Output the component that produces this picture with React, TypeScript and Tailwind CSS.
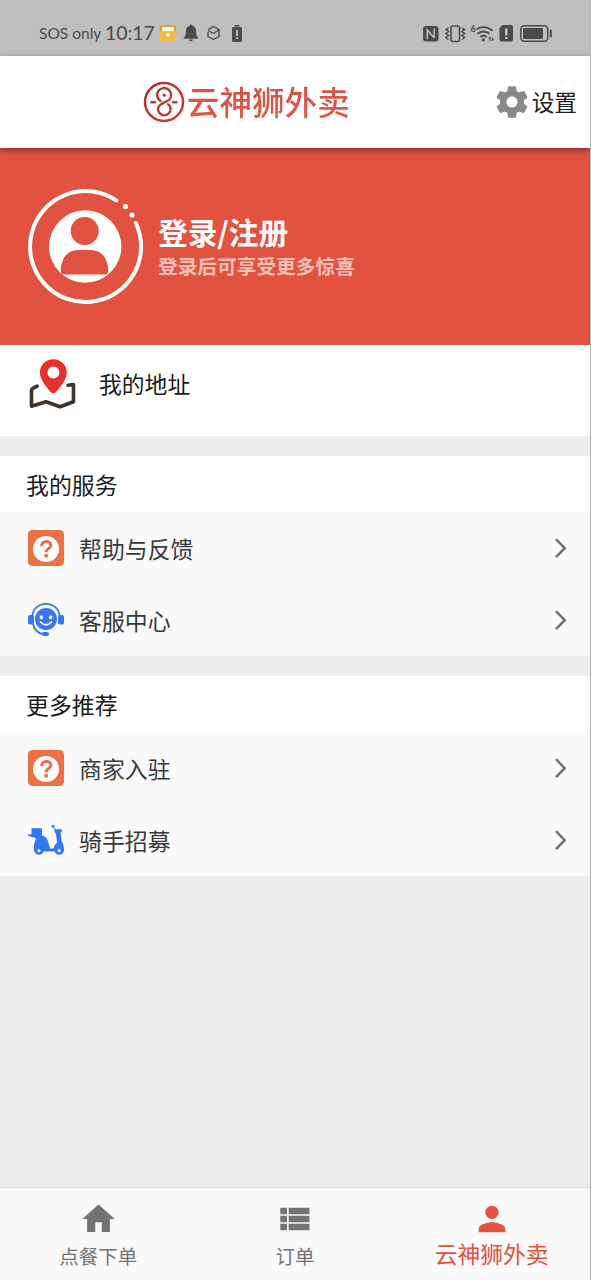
import type { ReactNode } from "react";

function StatusBar() {
  return (
    <div className="flex h-14 shrink-0 items-end justify-between bg-[#bfbfbf] pr-[37px] pb-[11px] pl-[39px] font-['Lato',sans-serif] text-[#4b4b4b]">
      <div className="flex h-6 items-center">
        <span className="w-[66px] text-[15.5px] leading-6 whitespace-nowrap">SOS only</span>
        <span className="w-[54px] text-[19.4px] leading-6 whitespace-nowrap">10:17</span>
        <svg width="18" height="18" viewBox="0 0 18 18" className="mr-[6px]">
          <rect x="1" y="1" width="16" height="16" rx="3" fill="#f5bb40" />
          <path d="M1 7V4a3 3 0 0 1 3-3h10a3 3 0 0 1 3 3v3z" fill="#dfa046" />
          <path d="M3 3h12v4H3z" fill="#fff6dc" />
          <rect x="7" y="9.5" width="4" height="3" rx="1" fill="#fff" />
        </svg>
        <svg width="16" height="18" viewBox="0 0 16 18" fill="currentColor" className="mr-[7px]">
          <path d="M8 0.5a1.5 1.5 0 0 1 1.4 1.3C11.7 2.4 13 4.2 13 6.7c0 4 .8 5.600 2.300 7v1.100H.700v-1.100C2.200 12.300 3 10.700 3 6.700c0-2.500 1.300-4.300 3.600-4.900A1.500 1.500 0 0 1 8 .500zM6.200 15.600h3.600a1.800 1.800 0 0 1-3.600 0z" />
        </svg>
        <svg
          width="15"
          height="16"
          viewBox="0 0 15 16"
          fill="none"
          stroke="currentColor"
          strokeWidth="1.4"
          strokeLinejoin="round"
          className="mr-[10px]"
        >
          <path d="M2.300 4.600 7.500 1.500l5.500 3v7L7.500 14.500 2 11.500V7M2 5.500l5.500 3 5.500-4" />
        </svg>
        <svg width="12" height="19" viewBox="0 0 12 19" fill="currentColor">
          <path d="M3.500 1h5v1.500h-5zM2.500 3h7A1.500 1.500 0 0 1 11 4.500v12A1.500 1.500 0 0 1 9.500 18h-7A1.500 1.500 0 0 1 1 16.500v-12A1.500 1.500 0 0 1 2.500 3z" />
          <path d="M5.200 6h1.600v6H5.200zM5.200 13.300h1.600V15H5.200z" fill="#d2d2d2" />
        </svg>
      </div>
      <svg width="132" height="24" viewBox="421 21 132 24" fill="currentColor">
        {/* nfc */}
        <rect x="423" y="26" width="15.500" height="15.500" rx="3" />
        <path
          d="M427.300 39V30l6.900 8M434.200 28.500v9.500M427.300 30l6.900 8"
          fill="none"
          stroke="#bfbfbf"
          strokeWidth="1.500"
        />
        {/* vibrate */}
        <rect x="451" y="26" width="8.500" height="15.500" rx="2" fill="none" stroke="currentColor" strokeWidth="1.600" />
        <path
          d="m448.500 28-2.500 1.500 2.500 2-2.500 2 2.500 2-2.500 2 2.500 2M462 28l2.500 1.500-2.500 2 2.500 2-2.500 2 2.500 2-2.500 2"
          fill="none"
          stroke="currentColor"
          strokeWidth="1.600"
        />
        {/* wifi */}
        <text x="470.500" y="31.500" fontSize="9" fontWeight="700" fontFamily="Lato, sans-serif">
          6
        </text>
        <path
          d="M476.500 29.300q8-5 16 1.500M477.500 33.700q6-4.600 12 0M480.300 37q3.200-2.400 6.200 0"
          fill="none"
          stroke="currentColor"
          strokeWidth="1.900"
        />
        <circle cx="483.400" cy="39.900" r="1.600" />
        <path d="M490 41v-4l-1.800 2M492.300 37v4l1.800-2" fill="none" stroke="currentColor" strokeWidth="1" />
        {/* sim alert */}
        <path d="M502.500 25h8.500a2 2 0 0 1 2 2v12.500a2 2 0 0 1-2 2h-9.500a2 2 0 0 1-2-2V28z" />
        <path d="M505.200 28.500h2.200v7h-2.200zM505.200 37h2.200v2h-2.200z" fill="#d2d2d2" />
        {/* battery */}
        <rect x="520.800" y="25.800" width="27" height="15.400" rx="3.500" fill="none" stroke="currentColor" strokeWidth="1.500" />
        <rect x="523" y="28" width="20" height="11" rx="1" />
        <rect x="549.800" y="29.500" width="2" height="8" rx="1" />
      </svg>
    </div>
  );
}

function LogoMark() {
  return (
    <svg width="42" height="42" viewBox="0 0 42 42" fill="none" strokeLinecap="round">
      <defs>
        <linearGradient id="brand" x1="0" y1="0" x2="1" y2="1">
          <stop offset="0" stopColor="#a92f2c" />
          <stop offset="1" stopColor="#c8443a" />
        </linearGradient>
      </defs>
      <circle cx="21" cy="21" r="19" stroke="url(#brand)" strokeWidth="2.500" />
      <path
        d="M17.500 20A7 7 0 1 1 26.500 18.500C23.500 21.500 15 22 15 28a6.300 6.300 0 0 0 12.600 0c0-2-.9-3.800-2.600-4.800M8.500 21.200H12M30 21.200h3.500"
        stroke="url(#brand)"
        strokeWidth="2.400"
      />
      <circle cx="21.200" cy="14.200" r="1.600" fill="#b23631" />
    </svg>
  );
}

function Header() {
  return (
    <header className="relative z-10 flex h-[92px] shrink-0 items-center bg-white shadow-[0_2px_6px_rgba(0,0,0,0.45)]">
      <div className="flex flex-1 items-center justify-center gap-[2px]">
        <LogoMark />
        <span className="mb-[2px] bg-linear-to-b from-[#cf4f42] to-[#e0604b] bg-clip-text text-[32.6px] leading-[48px] font-medium whitespace-nowrap text-transparent">
          云神狮外卖
        </span>
      </div>
      <div className="flex items-center gap-[1px] pr-[13px]">
        <svg width="38" height="38" viewBox="0 0 24 24" fill="#888888">
          <path d="M19.430 12.980c.040-.320.070-.640.070-.980s-.030-.660-.070-.980l2.110-1.650c.190-.150.240-.420.120-.640l-2-3.460c-.120-.220-.390-.300-.610-.220l-2.490 1c-.520-.400-1.080-.730-1.690-.980l-.380-2.650C14.460 2.180 14.250 2 14 2h-4c-.250 0-.460.180-.490.420l-.380 2.650c-.610.250-1.170.590-1.690.980l-2.490-1c-.230-.090-.490 0-.610.220l-2 3.460c-.130.220-.070.490.120.640l2.110 1.650c-.040.320-.070.650-.070.980s.030.660.070.980l-2.110 1.650c-.190.150-.240.420-.120.640l2 3.460c.120.220.390.300.610.220l2.490-1c.520.400 1.080.730 1.690.980l.380 2.650c.030.240.240.420.490.420h4c.250 0 .460-.180.490-.420l.380-2.650c.610-.250 1.170-.590 1.690-.980l2.490 1c.230.090.490 0 .610-.220l2-3.460c.120-.220.070-.490-.120-.640l-2.110-1.650zM12 15.500c-1.930 0-3.500-1.570-3.500-3.500s1.570-3.500 3.500-3.500 3.500 1.570 3.500 3.500-1.570 3.500-3.500 3.500z" />
        </svg>
        <span className="text-[22.7px] leading-8 text-[#212121]">设置</span>
      </div>
    </header>
  );
}

function Avatar() {
  return (
    <svg width="116" height="116" viewBox="27 188 116 116" fill="none">
      <path
        d="M116.200 199.300A55.500 55.500 0 1 0 135.800 222"
        stroke="#fff"
        strokeWidth="4"
        strokeLinecap="round"
      />
      <circle cx="125.500" cy="205.500" r="2.600" fill="#fff" />
      <circle cx="132" cy="214" r="2.600" fill="#fff" />
      <circle cx="85.200" cy="245.500" r="36.200" fill="#fff" />
      <circle cx="84.700" cy="230" r="14" fill="#e15241" />
      <path d="M60.800 270c0-13.500 7.200-21 17.200-21h13c10 0 17.200 7.500 17.200 21q0 3.500-3.500 3.500H64.300q-3.500 0-3.500-3.500z" fill="#e15241" />
    </svg>
  );
}

function Profile() {
  return (
    <section className="flex h-[197px] shrink-0 items-center gap-[15px] bg-[#e15241] pl-[27px]">
      <Avatar />
      <div className="flex flex-col pt-[2px] font-bold">
        <span className="text-[29.7px] leading-[36px] text-white">登录/注册</span>
        <span className="text-[19.7px] leading-8 text-[#f7c1b9]">登录后可享受更多惊喜</span>
      </div>
    </section>
  );
}

function MapIcon() {
  return (
    <svg width="48" height="52" viewBox="29 358 48 52" fill="none">
      <path
        d="M37 386.200q-5 1.800-5.500 4v16l14.500-4.500 14 5 13.500-5V384.500l-5.500.8"
        stroke="#40332b"
        strokeWidth="3.600"
        strokeLinejoin="round"
        strokeLinecap="round"
      />
      <path
        fillRule="evenodd"
        d="M53.300 359.300c7.500 0 13.500 5.800 13.500 13.200 0 6.500-5.500 13.300-10.600 19.200q-2.900 3-5.800 0C45.300 385.800 39.900 379 39.900 372.500c0-7.400 6-13.200 13.400-13.200zm.1 7.200a6 6 0 1 0 0 12 6 6 0 1 0 0-12z"
        fill="#e5302b"
      />
    </svg>
  );
}

function QuestionIcon() {
  return (
    <svg width="38" height="38" viewBox="0 0 38 38" fill="none">
      <rect x="1" y="1" width="36" height="36" rx="4.500" fill="#ec7147" />
      <circle cx="19" cy="20" r="13" fill="#fff" />
      <path
        d="M14.700 17.200c-.3-6.300 9.200-6.200 9.200-1 0 3.500-4.800 3.300-4.800 7"
        stroke="#ec7147"
        strokeWidth="3"
      />
      <circle cx="19.100" cy="26.700" r="2" fill="#ec7147" />
    </svg>
  );
}

function SupportIcon() {
  return (
    <svg width="38" height="34" viewBox="27 603 38 34" fill="none">
      <path d="M32.500 616a13.500 12.200 0 0 1 27 0M33 624q2 9 11 10.500" stroke="#3a78ea" strokeWidth="1.800" />
      <circle cx="46" cy="619" r="11" fill="#3577ee" />
      <rect x="28" y="615" width="6" height="9.500" rx="1.800" fill="#3577ee" />
      <rect x="58" y="615" width="6" height="9.500" rx="1.800" fill="#3577ee" />
      <rect x="42" y="632" width="7" height="4" rx="2" fill="#3577ee" />
      <rect x="39.800" y="615.500" width="3.200" height="3.600" rx="1" fill="#fff" />
      <rect x="49" y="615.500" width="3.200" height="3.600" rx="1" fill="#fff" />
      <path d="M40.500 622q5.500 5.500 11 0" stroke="#fff" strokeWidth="1.700" strokeLinecap="round" />
    </svg>
  );
}

function ScooterIcon() {
  return (
    <svg width="38" height="32" viewBox="27 825 38 32" fill="#3577ee">
      <path d="M31.500 829.300h10.500v7.200c3.500.5 5.800 3.500 6.500 7.500l1.500 5.500h3.500q.5-3.500 3.500-6l-1-8.500-1.500-2v-2.800h7.300v3h-1.300l1 8.800c1.500 2 2.300 4.500 2.200 8.500v2H34.500c-1.500-3.500-1-8.500 1.500-12.500l-1.500-1.800h-3l-.8-1H28.200v-1.700h3.300z" />
      <circle cx="39" cy="851" r="4.800" />
      <circle cx="59.200" cy="851" r="4.800" />
      <circle cx="39" cy="851.700" r="1.600" fill="#fafafa" />
      <circle cx="59.200" cy="851.700" r="1.600" fill="#fafafa" />
      <circle cx="53" cy="827.300" r="1.500" />
      <path d="m54 829 2 3" stroke="#3577ee" strokeWidth="1.200" />
    </svg>
  );
}

function Row({ icon, label }: { icon: ReactNode; label: string }) {
  return (
    <div className="flex h-[72px] items-center bg-[#fafafa] pr-[23px] pl-[27px]">
      <div className="flex w-[52px] items-center">{icon}</div>
      <span className="flex-1 text-[22.9px] leading-8 text-[#37393d]">{label}</span>
      <svg width="14" height="22" viewBox="0 0 14 22" fill="none" stroke="#707070" strokeWidth="2.500">
        <path d="M3 2.200 11.700 11.200 3 20.200" />
      </svg>
    </div>
  );
}

function Section({ title, children }: { title: string; children: ReactNode }) {
  return (
    <section className="mt-5 shrink-0">
      <h2 className="flex h-14 items-center bg-white pl-[26px] text-[22.9px] leading-8 text-[#1b1b1b]">{title}</h2>
      {children}
    </section>
  );
}

function TabBar() {
  return (
    <nav className="grid h-[93px] shrink-0 grid-cols-3 border-t border-[#dcdcdc] bg-[#fafafa] text-[#737373]">
      <div className="flex flex-col items-center pt-[11px]">
        <svg width="39" height="40" viewBox="0 0 24 24" fill="currentColor">
          <path d="M10 20v-6h4v6h5v-8h3L12 3 2 12h3v8z" />
        </svg>
        <span className="mt-[3px] text-[19.5px] leading-7">点餐下单</span>
      </div>
      <div className="flex flex-col items-center pt-[11px]">
        <svg width="41" height="40" viewBox="0 0 24 24" fill="currentColor">
          <path d="M3.500 14h4v-4h-4v4zm0 4.800h4v-4h-4v4zM3.500 9.200h4v-4h-4v4zM8.500 14h12.500v-4H8.500v4zm0 4.800h12.500v-4H8.500v4zM8.500 5.200v4h12.500v-4H8.500z" />
        </svg>
        <span className="mt-[3px] text-[19.5px] leading-7">订单</span>
      </div>
      <div className="flex flex-col items-center pt-[11px] text-[#e15241]">
        <svg width="40" height="40" viewBox="0 0 24 24" fill="currentColor">
          <path d="M12 12c2.210 0 4-1.790 4-4s-1.790-4-4-4-4 1.790-4 4 1.790 4 4 4zm0 2c-2.670 0-8 1.340-8 4v2h16v-2c0-2.660-5.330-4-8-4z" />
        </svg>
        <span className="-mt-[1px] text-[22.8px] leading-8 whitespace-nowrap">云神狮外卖</span>
      </div>
    </nav>
  );
}

export default function App() {
  return (
    <div
      lang="zh-CN"
      className="flex h-[1280px] w-[591px] flex-col overflow-hidden border-r border-[#b5b5b5] bg-[#ededed] font-['Noto_Sans_CJK_SC',sans-serif]"
    >
      <StatusBar />
      <Header />
      <Profile />
      <div className="flex h-[91px] shrink-0 items-start gap-[22px] bg-white pt-[13px] pl-[29px]">
        <MapIcon />
        <span className="pt-[10px] text-[22.8px] leading-8 text-[#1b1b1b]">我的地址</span>
      </div>
      <Section title="我的服务">
        <Row icon={<QuestionIcon />} label="帮助与反馈" />
        <Row icon={<SupportIcon />} label="客服中心" />
      </Section>
      <Section title="更多推荐">
        <Row icon={<QuestionIcon />} label="商家入驻" />
        <Row icon={<ScooterIcon />} label="骑手招募" />
      </Section>
      <div className="flex-1" />
      <TabBar />
    </div>
  );
}
